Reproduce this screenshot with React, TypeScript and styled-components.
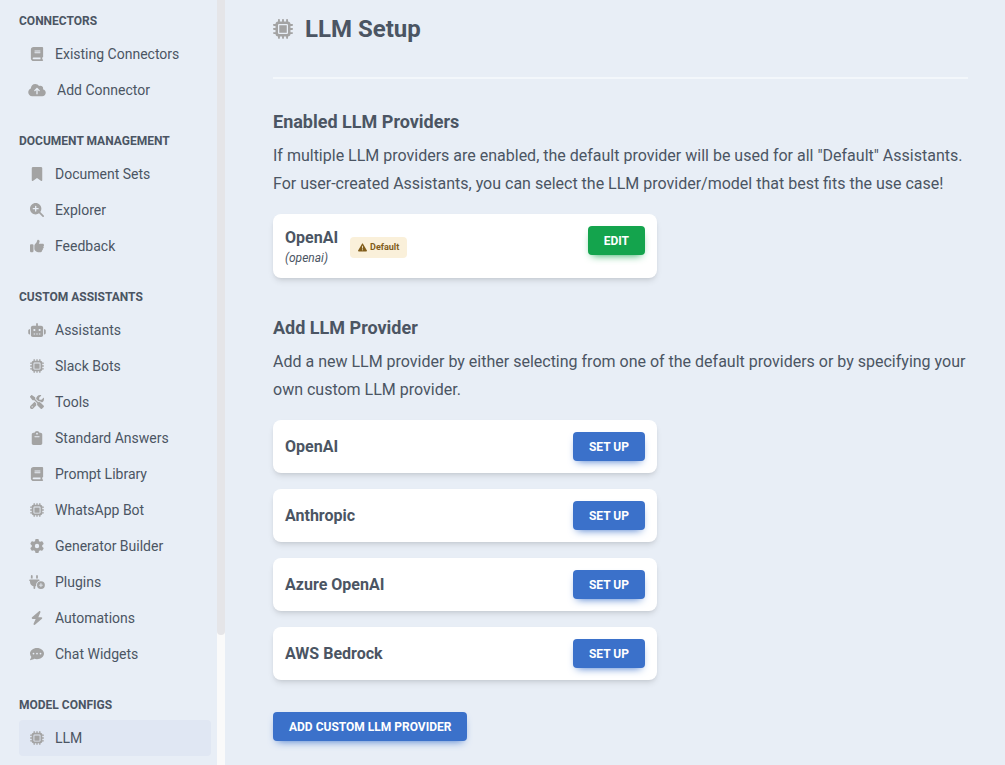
import React from "react";
import styled, { createGlobalStyle } from "styled-components";
import type { IconType } from "react-icons";
import {
  FaBolt,
  FaBook,
  FaBookmark,
  FaClipboard,
  FaCloudArrowUp,
  FaCommentDots,
  FaGear,
  FaMagnifyingGlassPlus,
  FaMicrochip,
  FaPlugCirclePlus,
  FaRobot,
  FaScrewdriverWrench,
  FaThumbsUp,
  FaTriangleExclamation,
} from "react-icons/fa6";

const GlobalStyle = createGlobalStyle`
  *, *::before, *::after { box-sizing: border-box; }
  body {
    margin: 0;
    background: #e8eef6;
    color: #4b5563;
    font-family: Roboto, "Liberation Sans", sans-serif;
    font-size: 16px;
  }
  h1, h2, h3, p, ul { margin: 0; padding: 0; }
`;

const Page = styled.div`
  display: flex;
  height: 100vh;
  overflow: hidden;
`;

const Sidebar = styled.aside`
  display: flex;
  flex: 0 0 225px;
`;

const Nav = styled.nav`
  flex: 1;
  display: flex;
  flex-direction: column;
  gap: 25px;
  padding: 13px 6px 12px 19px;
`;

const ScrollTrack = styled.div`
  flex: 0 0 8px;
  background: #fafafa;
`;

const ScrollThumb = styled.div`
  height: 83%;
  background: #e5e5e8;
  border-radius: 0 0 4px 4px;
`;

const NavHeading = styled.h2`
  margin-bottom: 7px;
  font-size: 12px;
  line-height: 16px;
  font-weight: 700;
  text-transform: uppercase;
`;

const NavList = styled.ul`
  list-style: none;
`;

const NavLink = styled.a<{ $active: boolean }>`
  display: flex;
  align-items: center;
  gap: 8px;
  height: 36px;
  padding: 0 8px;
  border-radius: 4px;
  background: ${(p) => (p.$active ? "#e0e7f3" : "transparent")};
  color: inherit;
  font-size: 14px;
  line-height: 20px;
  text-decoration: none;
`;

const IconSlot = styled.span<{ $wide: boolean }>`
  display: flex;
  flex: 0 0 ${(p) => (p.$wide ? 22 : 20)}px;
  color: #a3a3a3;

  svg {
    width: 20px;
    height: 14px;
  }
`;

const Main = styled.main`
  flex: 1;
  min-width: 0;
  padding: 13px 37px 24px 48px;
`;

const PageHeader = styled.header`
  display: flex;
  align-items: center;
  gap: 12px;
  padding-bottom: 32px;
  border-bottom: 2px solid #f3f7fb;

  svg {
    width: 20px;
    height: 20px;
    color: #a3a3a3;
  }
`;

const PageTitle = styled.h1`
  font-size: 24px;
  line-height: 32px;
  font-weight: 700;
`;

const Section = styled.section`
  margin-top: 29px;

  & + & {
    margin-top: 36px;
  }
`;

const SectionTitle = styled.h2`
  margin-bottom: 6px;
  font-size: 18px;
  line-height: 28px;
  font-weight: 700;
`;

const Description = styled.p`
  margin-bottom: 16px;
  line-height: 28px;
`;

const CardList = styled.div`
  display: flex;
  flex-direction: column;
  gap: 16px;
  max-width: 384px;
`;

const Card = styled.article<{ $top?: boolean }>`
  display: flex;
  align-items: ${(p) => (p.$top ? "flex-start" : "center")};
  justify-content: space-between;
  padding: 12px;
  border-radius: 8px;
  background: #fff;
  box-shadow: 0 4px 6px -1px rgba(0, 0, 0, 0.1), 0 2px 4px -2px rgba(0, 0, 0, 0.1);
`;

const CardInfo = styled.div`
  display: flex;
  align-items: center;
  gap: 12px;
`;

const CardTitle = styled.h3`
  font-size: 16px;
  line-height: 24px;
  font-weight: 700;
`;

const CardSubtitle = styled.p`
  font-size: 12px;
  line-height: 16px;
  font-style: italic;
`;

const Badge = styled.span`
  display: flex;
  align-items: center;
  gap: 3px;
  margin-top: 3px;
  padding: 0 8px;
  border-radius: 4px;
  background: #faf0da;
  color: #815d1a;
  font-size: 9px;
  line-height: 21px;
  font-weight: 700;
`;

const Button = styled.button<{ $tone?: "success" }>`
  height: 29px;
  padding: 0 16px;
  border: 0;
  border-radius: 4px;
  background: ${(p) => (p.$tone ? "#14a44d" : "#3b71ca")};
  box-shadow: 0 4px 9px -4px ${(p) => (p.$tone ? "#14a44d" : "#3b71ca")};
  color: #fff;
  font-family: inherit;
  font-size: 12px;
  line-height: 18px;
  font-weight: 700;
  text-transform: uppercase;
  cursor: pointer;
`;

const Footer = styled.div`
  margin-top: 32px;
`;

type Item = { label: string; icon: IconType; wide?: boolean; active?: boolean };

const groups: { title: string; items: Item[] }[] = [
  {
    title: "Connectors",
    items: [
      { label: "Existing Connectors", icon: FaBook },
      { label: "Add Connector", icon: FaCloudArrowUp, wide: true },
    ],
  },
  {
    title: "Document Management",
    items: [
      { label: "Document Sets", icon: FaBookmark },
      { label: "Explorer", icon: FaMagnifyingGlassPlus },
      { label: "Feedback", icon: FaThumbsUp },
    ],
  },
  {
    title: "Custom Assistants",
    items: [
      { label: "Assistants", icon: FaRobot },
      { label: "Slack Bots", icon: FaMicrochip },
      { label: "Tools", icon: FaScrewdriverWrench },
      { label: "Standard Answers", icon: FaClipboard },
      { label: "Prompt Library", icon: FaBook },
      { label: "WhatsApp Bot", icon: FaMicrochip },
      { label: "Generator Builder", icon: FaGear },
      { label: "Plugins", icon: FaPlugCirclePlus },
      { label: "Automations", icon: FaBolt },
      { label: "Chat Widgets", icon: FaCommentDots },
    ],
  },
  {
    title: "Model Configs",
    items: [{ label: "LLM", icon: FaMicrochip, active: true }],
  },
];

const providers = ["OpenAI", "Anthropic", "Azure OpenAI", "AWS Bedrock"];

export default function App() {
  return (
    <Page>
      <GlobalStyle />
      <Sidebar>
        <Nav>
          {groups.map((group) => (
            <div key={group.title}>
              <NavHeading>{group.title}</NavHeading>
              <NavList>
                {group.items.map(({ label, icon: Icon, wide, active }) => (
                  <li key={label}>
                    <NavLink href="#" $active={!!active} aria-current={active ? "page" : undefined}>
                      <IconSlot $wide={!!wide}>
                        <Icon aria-hidden />
                      </IconSlot>
                      {label}
                    </NavLink>
                  </li>
                ))}
              </NavList>
            </div>
          ))}
        </Nav>
        <ScrollTrack>
          <ScrollThumb />
        </ScrollTrack>
      </Sidebar>
      <Main>
        <PageHeader>
          <FaMicrochip aria-hidden />
          <PageTitle>LLM Setup</PageTitle>
        </PageHeader>
        <Section>
          <SectionTitle>Enabled LLM Providers</SectionTitle>
          <Description>
            If multiple LLM providers are enabled, the default provider will be used for all
            "Default" Assistants. For user-created Assistants, you can select the LLM
            provider/model that best fits the use case!
          </Description>
          <CardList>
            <Card $top>
              <CardInfo>
                <div>
                  <CardTitle>OpenAI</CardTitle>
                  <CardSubtitle>(openai)</CardSubtitle>
                </div>
                <Badge>
                  <FaTriangleExclamation aria-hidden />
                  Default
                </Badge>
              </CardInfo>
              <Button type="button" $tone="success">Edit</Button>
            </Card>
          </CardList>
        </Section>
        <Section>
          <SectionTitle>Add LLM Provider</SectionTitle>
          <Description>
            Add a new LLM provider by either selecting from one of the default providers or by
            specifying your own custom LLM provider.
          </Description>
          <CardList>
            {providers.map((name) => (
              <Card key={name}>
                <CardTitle>{name}</CardTitle>
                <Button type="button">Set up</Button>
              </Card>
            ))}
          </CardList>
          <Footer>
            <Button type="button">Add Custom LLM Provider</Button>
          </Footer>
        </Section>
      </Main>
    </Page>
  );
}
